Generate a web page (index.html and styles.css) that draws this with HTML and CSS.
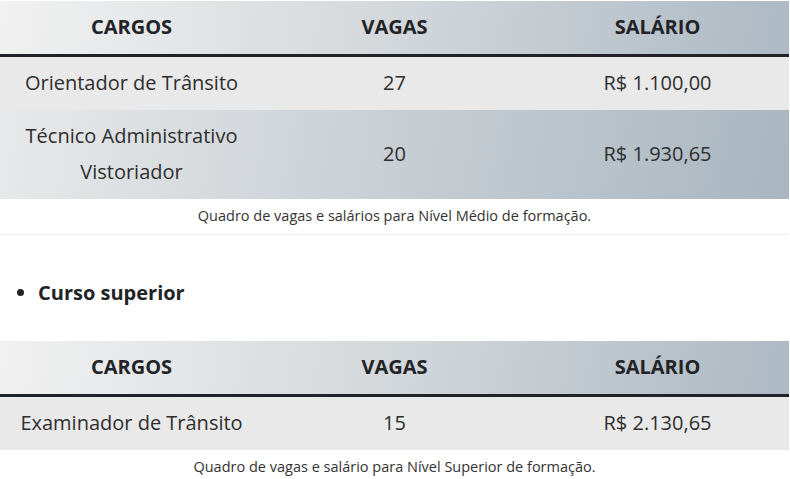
FILE: index.html
```html
<!DOCTYPE html>
<html lang="pt-BR">
<head>
<meta charset="utf-8">
<link rel="stylesheet" href="styles.css">
</head>
<body>
<figure class="tbl-fig first">
  <table class="tbl">
    <thead>
      <tr><th>CARGOS</th><th>VAGAS</th><th>SALÁRIO</th></tr>
    </thead>
    <tbody>
      <tr class="plain"><td>Orientador de Trânsito</td><td>27</td><td>R$ 1.100,00</td></tr>
      <tr class="grad"><td>Técnico Administrativo<br>Vistoriador</td><td>20</td><td>R$ 1.930,65</td></tr>
    </tbody>
  </table>
  <figcaption class="cap bordered">Quadro de vagas e salários para Nível Médio de formação.</figcaption>
</figure>

<ul class="list">
  <li><strong>Curso superior</strong></li>
</ul>

<figure class="tbl-fig">
  <table class="tbl">
    <thead>
      <tr><th>CARGOS</th><th>VAGAS</th><th>SALÁRIO</th></tr>
    </thead>
    <tbody>
      <tr class="plain"><td>Examinador de Trânsito</td><td>15</td><td>R$ 2.130,65</td></tr>
    </tbody>
  </table>
  <figcaption class="cap">Quadro de vagas e salário para Nível Superior de formação.</figcaption>
</figure>
</body>
</html>
```

FILE: styles.css
```css
html, body {
  margin: 0;
  padding: 0;
  background: #ffffff;
}
body {
  font-family: "Open Sans", "DejaVu Sans", sans-serif;
  color: #2b2b2b;
  width: 790px;
  overflow: hidden;
}
.tbl-fig {
  margin: 0;
  width: 789px;
}
.tbl-fig.first {
  padding-top: 1px;
}
.tbl {
  width: 100%;
  border-collapse: collapse;
  table-layout: fixed;
}
.tbl th, .tbl td {
  text-align: center;
  vertical-align: middle;
  font-size: 20px;
  line-height: 36px;
  padding: 8px 0 9px;
}
.tbl thead tr {
  background: linear-gradient(100deg, #f1f1f1 0%, #d6dadd 45%, #adb9c3 100%);
}
.tbl th {
  font-weight: 700;
  color: #222326;
  border-bottom: 3px solid #1f2226;
}
.tbl td {
  color: #2e2e2e;
}
.tbl tr.plain {
  background: #e9e9e9;
}
.tbl tr.grad {
  background: linear-gradient(100deg, #e8e9ea 0%, #cbd1d6 45%, #a9b6c0 100%);
}
.cap {
  font-size: 14.5px;
  line-height: 20px;
  color: #333333;
  text-align: center;
  padding: 7px 0 8px;
}
.cap.bordered {
  border-bottom: 1px solid #ececec;
}
.list {
  margin: 43px 0 33px;
  padding-left: 38px;
}
.list li {
  font-size: 20px;
  line-height: 30px;
  color: #222326;
}
```
